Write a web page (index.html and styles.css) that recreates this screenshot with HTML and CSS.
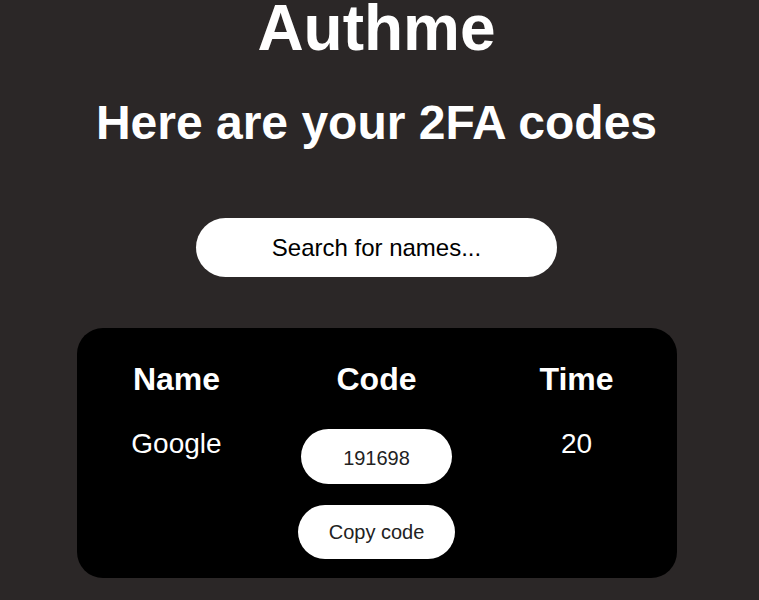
FILE: index.html
```html
<!DOCTYPE html>
<html>
<head>
<meta charset="utf-8">
<link rel="stylesheet" href="styles.css">
</head>
<body>
<main class="page">
  <h1 class="title">Authme</h1>
  <h2 class="subtitle">Here are your 2FA codes</h2>
  <input class="search" type="text" placeholder="Search for names...">
  <section class="card">
    <div class="grid">
      <div class="head">Name</div>
      <div class="head">Code</div>
      <div class="head">Time</div>
      <div class="cell name">Google</div>
      <div class="cell code">
        <button class="pill code-pill">191698</button>
        <button class="pill copy-pill">Copy code</button>
      </div>
      <div class="cell time">20</div>
    </div>
  </section>
</main>
</body>
</html>
```

FILE: styles.css
```css
html, body {
  margin: 0;
  padding: 0;
  background: #2b2727;
  color: #fff;
  font-family: "Liberation Sans", Arial, sans-serif;
}
.page {
  display: flex;
  flex-direction: column;
  align-items: center;
  padding-right: 6px;
}
.title {
  margin: -8px 0 0;
  font-size: 64px;
  line-height: 72px;
  font-weight: bold;
}
.subtitle {
  margin: 32px 0 0;
  font-size: 48px;
  line-height: 54px;
  font-weight: bold;
}
.search {
  margin-top: 68px;
  width: 361px;
  height: 59px;
  box-sizing: border-box;
  border: none;
  border-radius: 30px;
  background: #fff;
  text-align: center;
  font-family: "Liberation Sans", Arial, sans-serif;
  font-size: 24px;
  outline: none;
}
.search::placeholder {
  color: #000;
  opacity: 1;
}
.card {
  margin-top: 51px;
  width: 600px;
  height: 250px;
  box-sizing: border-box;
  background: #000;
  border-radius: 26px;
  padding-top: 34px;
}
.grid {
  display: grid;
  grid-template-columns: 200px 200px 200px;
  row-gap: 33px;
}
.head {
  text-align: center;
  font-size: 32px;
  font-weight: bold;
  line-height: 34px;
}
.cell {
  text-align: center;
  font-size: 28px;
  line-height: 30px;
  padding-top: 0;
}
.code {
  display: flex;
  flex-direction: column;
  align-items: center;
  gap: 21px;
}
.pill {
  border: none;
  background: #fff;
  color: #222;
  border-radius: 28px;
  font-family: "Liberation Sans", Arial, sans-serif;
  font-size: 20px;
  padding: 0;
}
.code-pill {
  width: 151px;
  height: 55px;
  padding-top: 4px;
}
.copy-pill {
  width: 157px;
  height: 54px;
}
```
